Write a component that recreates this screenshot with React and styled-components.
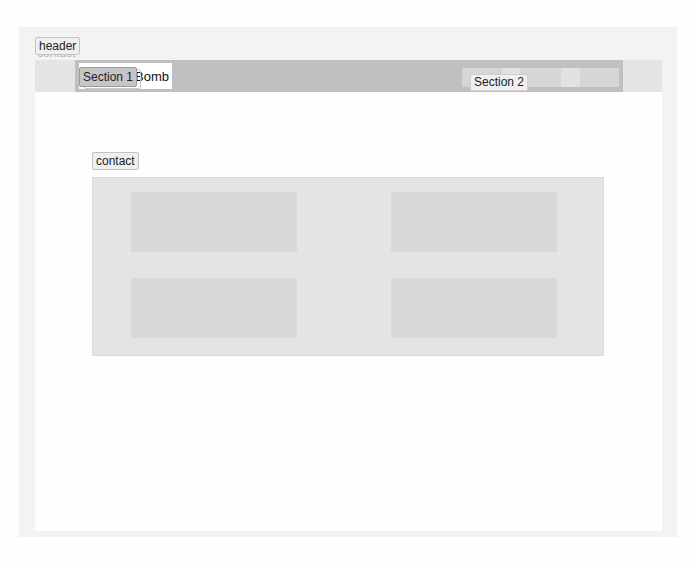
import React from 'react';
import styled, { createGlobalStyle } from 'styled-components';

const GlobalStyle = createGlobalStyle`
  body {
    margin: 0;
    background: #fefefe;
    font-family: "Liberation Sans", Arial, sans-serif;
  }
`;

const cells = [1, 2, 3, 4];

const App = () => {
  return (
    <>
      <GlobalStyle />
      <Frame>
        <LabelRow>
          <Ghost>contact</Ghost>
          <Tag>header</Tag>
        </LabelRow>
        <HeaderBar>
          <Nav>
            <Brand>
              <BrandBox>Bomb</BrandBox>
              <GhostTag />
              <Tag dark>Section 1</Tag>
            </Brand>
            <Links>
              <Link w={40} />
              <Link w={18} light />
              <Link w={41} />
              <Link w={19} light />
              <Link w={39} />
              <FloatTag>Section 2</FloatTag>
            </Links>
          </Nav>
        </HeaderBar>
        <Main>
          <Tag>contact</Tag>
          <ContactBox>
            {cells.map(c => <Cell key={c} />)}
          </ContactBox>
        </Main>
      </Frame>
    </>
  );
};

const Frame = styled.div`
  margin: 27px 0 0 19px;
  width: 658px;
  height: 510px;
  box-sizing: border-box;
  padding: 9px 15px 6px 16px;
  background: #f3f3f3;
  display: flex;
  flex-direction: column;
`;

const LabelRow = styled.div`
  position: relative;
  height: 24px;
  overflow: hidden;
`;

const Ghost = styled.span`
  position: absolute;
  left: 2px;
  top: 10px;
  font-size: 12px;
  color: #bcbcbc;
`;

const Tag = styled.span`
  position: relative;
  display: inline-flex;
  align-items: center;
  height: 18px;
  box-sizing: border-box;
  padding: 0 3px;
  font-size: 12px;
  color: #222;
  background: ${p => (p.dark ? '#c6c6c6' : '#efefef')};
  border: 1px solid ${p => (p.dark ? '#9a9a9a' : '#c2c2c2')};
  border-radius: 2px;
  z-index: 2;
`;

const HeaderBar = styled.div`
  height: 32px;
  background: #e4e4e4;
  padding: 0 39px 0 40px;
  display: flex;
`;

const Nav = styled.nav`
  flex: 1;
  background: #c0c0c0;
  display: flex;
  align-items: center;
  justify-content: space-between;
  padding: 0 4px;
`;

const Brand = styled.div`
  position: relative;
  height: 26px;
  display: flex;
  align-items: center;

  & > ${Tag} {
    position: absolute;
    left: 0;
    top: 4px;
    height: 20px;
  }
`;

const BrandBox = styled.div`
  height: 26px;
  width: 93px;
  box-sizing: border-box;
  padding-left: 56px;
  background: #fff;
  display: flex;
  align-items: center;
  font-size: 13px;
  color: #111;
`;

const GhostTag = styled.div`
  position: absolute;
  left: 5px;
  top: 6px;
  width: 57px;
  height: 20px;
  box-sizing: border-box;
  border: 1px solid #c8c8c8;
  border-radius: 2px;
`;

const Links = styled.div`
  position: relative;
  display: flex;
  height: 19px;
  margin-top: 2px;
  width: 157px;
  background: #d6d6d6;
`;

const Link = styled.div`
  width: ${p => p.w}px;
  background: ${p => (p.light ? '#e2e2e2' : '#d6d6d6')};
`;

const FloatTag = styled(Tag)`
  position: absolute;
  left: 8px;
  top: 6px;
  height: 17px;
  background: #f0f0f0;
  border-color: #cfcfcf;
`;

const Main = styled.main`
  flex: 1;
  background: #fefefe;
  padding: 60px 0 0 57px;
  display: flex;
  flex-direction: column;
  align-items: flex-start;
`;

const ContactBox = styled.section`
  margin-top: 7px;
  width: 512px;
  height: 179px;
  box-sizing: border-box;
  background: #e4e4e4;
  border: 1px solid #d9d9d9;
  padding: 14px 0 0 38px;
  display: grid;
  grid-template-columns: 166px 166px;
  grid-auto-rows: 60px;
  column-gap: 94px;
  row-gap: 26px;
`;

const Cell = styled.div`
  background: #d8d8d8;
`;

export default App;
